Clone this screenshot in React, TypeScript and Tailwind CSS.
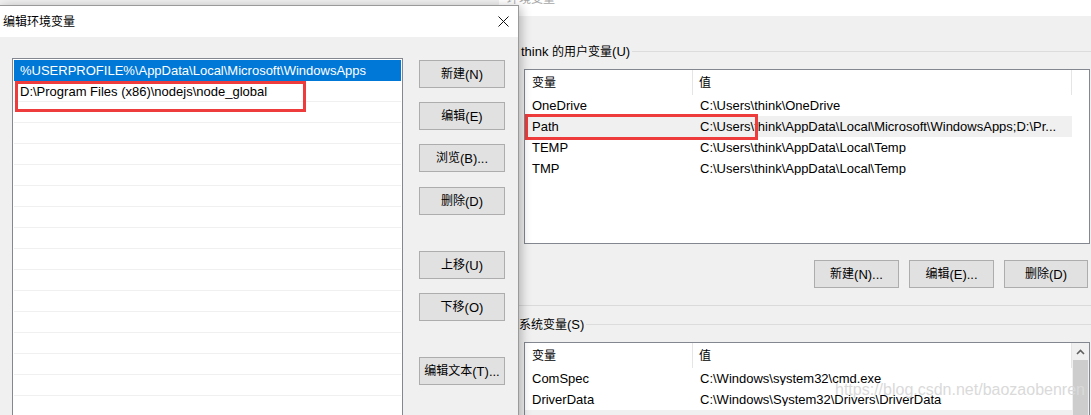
import { Fragment } from "react"

// Chinese runs are drawn at 12px, latin runs at 13px, as in the Windows dialog
const Label = ({ text }: { text: string }) => {
  const parts = text.split(/([\u4e00-\u9fff]+)/).filter(Boolean)
  return (
    <>
      {parts.map((part, i) =>
        /[\u4e00-\u9fff]/.test(part) ? (
          <span key={i} className="text-[12px]">
            {part}
          </span>
        ) : (
          <Fragment key={i}>{part}</Fragment>
        ),
      )}
    </>
  )
}

const WinButton = ({ text, className = "" }: { text: string; className?: string }) => (
  <div
    className={`flex h-[28px] items-center justify-center border border-[#adadad] bg-[#e1e1e1] ${className}`}>
    <Label text={text} />
  </div>
)

const DIALOG_ITEMS = [
  "%USERPROFILE%\\AppData\\Local\\Microsoft\\WindowsApps",
  "D:\\Program Files (x86)\\nodejs\\node_global",
]

const USER_VARS = [
  { name: "OneDrive", value: "C:\\Users\\think\\OneDrive" },
  { name: "Path", value: "C:\\Users\\think\\AppData\\Local\\Microsoft\\WindowsApps;D:\\Pr..." },
  { name: "TEMP", value: "C:\\Users\\think\\AppData\\Local\\Temp" },
  { name: "TMP", value: "C:\\Users\\think\\AppData\\Local\\Temp" },
]

const SYSTEM_VARS = [
  { name: "ComSpec", value: "C:\\Windows\\system32\\cmd.exe" },
  { name: "DriverData", value: "C:\\Windows\\System32\\Drivers\\DriverData" },
  { name: "", value: "" },
]

const ListHeader = ({ last }: { last: string }) => (
  <div className="flex h-[25px] shrink-0">
    <div className="flex w-[168px] items-center border-r border-[#e5e5e5] pl-[7px]">
      <Label text="变量" />
    </div>
    <div className={`flex items-center pl-[6px] ${last}`}>
      <Label text="值" />
    </div>
  </div>
)

const VarRow = ({ name, value, highlighted }: { name: string; value: string; highlighted?: boolean }) => (
  <div className={`flex h-[21px] w-[547px] shrink-0 items-center ${highlighted ? "bg-[#f0f0f0]" : ""}`}>
    <div className="w-[168px] pl-[7px]">{name}</div>
    <div className="flex-1 truncate whitespace-nowrap pl-[7px]">{value}</div>
  </div>
)

const GroupLabel = ({ text, className = "" }: { text: string; className?: string }) => (
  <div className={`flex h-[16px] items-center ${className}`}>
    <span className="whitespace-nowrap">
      <Label text={text} />
    </span>
    <div className="ml-[2px] h-px flex-1 bg-[#dcdcdc]" />
  </div>
)

export default function App() {
  return (
    <div className="relative h-[415px] w-[1091px] overflow-hidden bg-[#f0f0f0] font-['Liberation_Sans','Noto_Sans_CJK_SC',sans-serif] text-[13px] leading-none text-black">
      {/* background window: 环境变量 */}
      <div className="flex h-full flex-col">
        <div className="flex h-[16px] shrink-0 overflow-hidden">
          <div className="w-[499px] bg-[#f0f0f0]" />
          <div className="flex-1 bg-white pl-[8px]">
            <div className="-mt-[9px] text-[12px] leading-[16px] text-[#a6a6a6]">环境变量</div>
          </div>
        </div>

        <div className="flex flex-1 flex-col pl-[519px]">
          <GroupLabel text="think 的用户变量(U)" className="mt-[27px] pl-[2px]" />

          <div className="relative ml-[5px] mr-px mt-[10px] flex h-[175px] flex-col border border-[#828790] bg-white">
            <ListHeader last="w-[379px] border-r border-[#e5e5e5]" />
            {USER_VARS.map((row) => (
              <VarRow key={row.name} {...row} highlighted={row.name === "Path"} />
            ))}
            <div className="absolute left-[0px] top-[44px] h-[26px] w-[233px] border-[3px] border-[#ee3b3b]" />
          </div>

          <div className="mt-[16px] flex justify-end gap-[10px] pr-[3px]">
            <WinButton text="新建(N)..." className="w-[85px]" />
            <WinButton text="编辑(E)..." className="w-[85px]" />
            <WinButton text="删除(D)" className="w-[84px]" />
          </div>

          <div className="mt-[17px] h-px bg-[#dadada]" />

          <GroupLabel text="系统变量(S)" className="mt-[10px]" />

          <div className="relative ml-[5px] mr-px mt-[10px] flex flex-1 border border-b-0 border-[#828790] bg-white">
            <div className="flex flex-1 flex-col">
              <ListHeader last="flex-1 border-r border-[#e5e5e5]" />
              {SYSTEM_VARS.map((row, i) => (
                <VarRow key={i} {...row} highlighted={i === 2} />
              ))}
            </div>
            <div className="flex w-[17px] flex-col bg-[#f0f0f0]">
              <div className="flex h-[17px] items-center justify-center">
                <svg width="9" height="6" viewBox="0 0 9 6">
                  <path d="M1 5 L4.5 1.5 L8 5" fill="none" stroke="#606060" strokeWidth="1.6" />
                </svg>
              </div>
              <div className="mx-[1px] flex-1 bg-[#cdcdcd]" />
            </div>
            <div className="pointer-events-none absolute left-[310px] top-[37px] whitespace-nowrap font-['Liberation_Sans',sans-serif] text-[16px] leading-[20px] text-[#dadada]">
              https://blog.csdn.net/baozaobenren
            </div>
          </div>
        </div>
      </div>

      {/* foreground dialog: 编辑环境变量 */}
      <div className="absolute left-0 top-[5px] flex h-[430px] w-[519px] flex-col border-r border-t border-[#9a9a9a] bg-[#f0f0f0] shadow-[2px_2px_10px_rgba(0,0,0,0.28)]">
        <div className="flex h-[31px] shrink-0 items-center justify-between bg-white pl-[3px] pr-[9px]">
          <span className="text-[12px]">编辑环境变量</span>
          <svg width="11" height="11" viewBox="0 0 11 11">
            <path d="M0.5 0.5 L10.5 10.5 M10.5 0.5 L0.5 10.5" stroke="#111" strokeWidth="1" />
          </svg>
        </div>

        <div className="flex flex-1 gap-[16px] pl-[12px] pt-[21px]">
          <div className="relative flex w-[391px] flex-col border border-b-0 border-[#828790] bg-white p-px">
            {Array.from({ length: 17 }).map((_, i) => (
              <div
                key={i}
                className={`flex h-[21px] shrink-0 items-center whitespace-nowrap border-b pl-[6px] ${
                  i === 0 ? "border-[#0078d7] bg-[#0078d7] text-white" : "border-[#f0f0f0]"
                }`}>
                {DIALOG_ITEMS[i] ?? ""}
              </div>
            ))}
            <div className="absolute left-[2px] top-[22px] h-[31px] w-[291px] border-[3px] border-[#ee3b3b]" />
          </div>

          <div className="mt-[2px] flex w-[86px] flex-col">
            <WinButton text="新建(N)" />
            <WinButton text="编辑(E)" className="mt-[14px]" />
            <WinButton text="浏览(B)..." className="mt-[14px]" />
            <WinButton text="删除(D)" className="mt-[15px]" />
            <WinButton text="上移(U)" className="mt-[36px]" />
            <WinButton text="下移(O)" className="mt-[14px]" />
            <WinButton text="编辑文本(T)..." className="mt-[36px]" />
          </div>
        </div>
      </div>
    </div>
  )
}
